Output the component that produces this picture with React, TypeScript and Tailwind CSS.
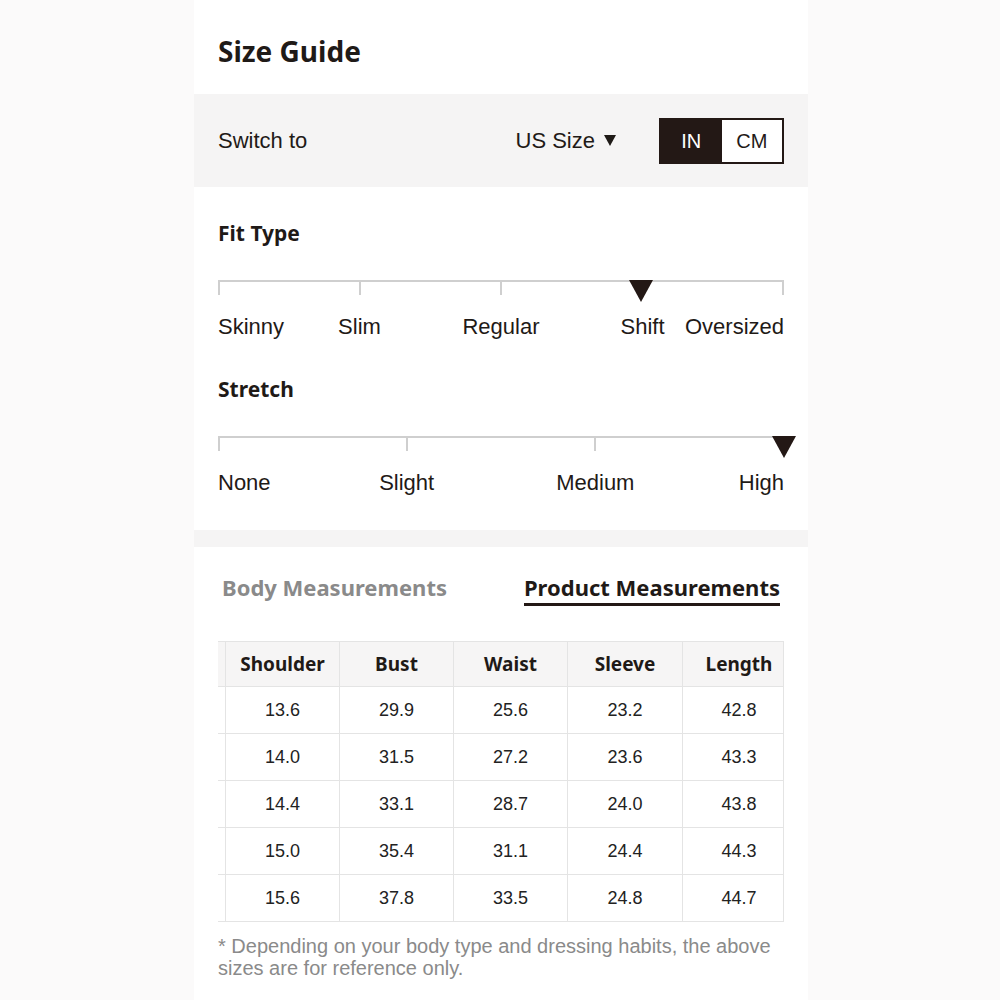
import React from "react";

const dark = "text-[#1f1a17]";

function Scale({ labels, active }: { labels: string[]; active: number }) {
  const n = labels.length;
  const segs = n - 1;
  return (
    <div className="relative h-[66px]">
      <div className="flex h-[15px]">
        {Array.from({ length: segs }).map((_, i) => (
          <div
            key={i}
            className={
              "flex-1 border-t-2 border-l-2 border-[#cfcfcf]" +
              (i === segs - 1 ? " border-r-2" : "")
            }
          />
        ))}
      </div>
      <div
        className="absolute top-0 h-0 w-0 -translate-x-1/2 border-l-[12px] border-r-[12px] border-t-[22px] border-l-transparent border-r-transparent border-t-[#231815]"
        style={{ left: `calc(${(active / segs) * 100}% - ${active === segs ? 0 : 2}px)` }}
      />
      {labels.map((l, i) => {
        const pos = (i / segs) * 100;
        const cls =
          i === 0 ? "" : i === n - 1 ? "-translate-x-full" : "-translate-x-1/2";
        return (
          <span
            key={l}
            className={`absolute top-[33px] whitespace-nowrap text-[22px] leading-[28px] ${dark} ${cls}`}
            style={{ left: `${pos}%` }}
          >
            {l}
          </span>
        );
      })}
    </div>
  );
}

const headers = ["Shoulder", "Bust", "Waist", "Sleeve", "Length"];
const rows = [
  ["13.6", "29.9", "25.6", "23.2", "42.8"],
  ["14.0", "31.5", "27.2", "23.6", "43.3"],
  ["14.4", "33.1", "28.7", "24.0", "43.8"],
  ["15.0", "35.4", "31.1", "24.4", "44.3"],
  ["15.6", "37.8", "33.5", "24.8", "44.7"],
];

export default function App() {
  return (
    <div
      className="flex h-[1000px] w-[1000px] justify-center bg-[#fbfafa] pl-[2px]"
      style={{ fontFamily: '"Liberation Sans", Arial, sans-serif' }}
    >
      <div className="flex w-[614px] flex-col">
        {/* Title */}
        <div className="flex h-[94px] items-center bg-white px-6 pt-[8px]">
          <h1
            className={`text-[28px] font-bold ${dark}`}
            style={{ fontFamily: '"Noto Sans", sans-serif' }}
          >
            Size Guide
          </h1>
        </div>

        {/* Switch band */}
        <div className="flex h-[93px] items-center justify-between bg-[#f5f4f4] px-6">
          <span className={`text-[22px] ${dark}`}>Switch to</span>
          <div className="flex items-center">
            <span className={`text-[22px] ${dark}`}>US Size</span>
            <span className="ml-[9px] h-0 w-0 border-l-[6px] border-r-[6px] border-t-[11px] border-l-transparent border-r-transparent border-t-[#1f1a17]" />
            <div className="ml-[43px] flex h-[46px] w-[125px] border-2 border-[#231815]">
              <div className="flex flex-1 items-center justify-center bg-[#231815] text-[20px] text-white">
                IN
              </div>
              <div className={`flex flex-1 items-center justify-center bg-white text-[20px] ${dark}`}>
                CM
              </div>
            </div>
          </div>
        </div>

        {/* Fit section */}
        <div className="flex h-[343px] flex-col bg-white px-6 pt-[32px]">
          <h2
            className={`text-[21px] font-bold leading-[28px] ${dark}`}
            style={{ fontFamily: '"Noto Sans", sans-serif' }}
          >
            Fit Type
          </h2>
          <div className="mt-[33px]">
            <Scale labels={["Skinny", "Slim", "Regular", "Shift", "Oversized"]} active={3} />
          </div>
          <h2
            className={`mt-[29px] text-[21px] font-bold leading-[28px] ${dark}`}
            style={{ fontFamily: '"Noto Sans", sans-serif' }}
          >
            Stretch
          </h2>
          <div className="mt-[33px]">
            <Scale labels={["None", "Slight", "Medium", "High"]} active={3} />
          </div>
        </div>

        <div className="h-[17px] bg-[#f5f4f4]" />

        {/* Measurements */}
        <div className="flex flex-1 flex-col bg-white px-6 pt-[25px]">
          <div
            className="flex items-start justify-between px-1 text-[22px] font-bold"
            style={{ fontFamily: '"Noto Sans", sans-serif' }}
          >
            <span className="leading-[30px] text-[#8a8a8a]">Body Measurements</span>
            <span className={`border-b-[3px] border-[#231815] pb-[1px] leading-[30px] ${dark}`}>
              Product Measurements
            </span>
          </div>

          <div className="mt-[35px] overflow-hidden border-r border-[#e4e4e4]">
            <div className="grid w-[577px] grid-cols-[7px_114px_114px_114px_115px_113px]">
              <div className="h-[46px] border-y border-[#e4e4e4] bg-[#f6f5f5]" />
              {headers.map((h) => (
                <div
                  key={h}
                  className={`flex h-[46px] items-center justify-center border-y border-l border-[#e4e4e4] bg-[#f6f5f5] text-[19px] font-bold ${dark}`}
                  style={{ fontFamily: '"Noto Sans", sans-serif' }}
                >
                  {h}
                </div>
              ))}
              {rows.map((r, ri) => (
                <React.Fragment key={ri}>
                  <div className="h-[47px] border-b border-[#e4e4e4]" />
                  {r.map((c, ci) => (
                    <div
                      key={ci}
                      className="flex h-[47px] items-center justify-center border-b border-l border-[#e4e4e4] text-[18px] text-[#222]"
                    >
                      {c}
                    </div>
                  ))}
                </React.Fragment>
              ))}
            </div>
          </div>

          <p className="mt-[13px] text-[20px] leading-[22px] text-[#8a8a8a]">
            * Depending on your body type and dressing habits, the above sizes are for reference only.
          </p>
        </div>
      </div>
    </div>
  );
}
